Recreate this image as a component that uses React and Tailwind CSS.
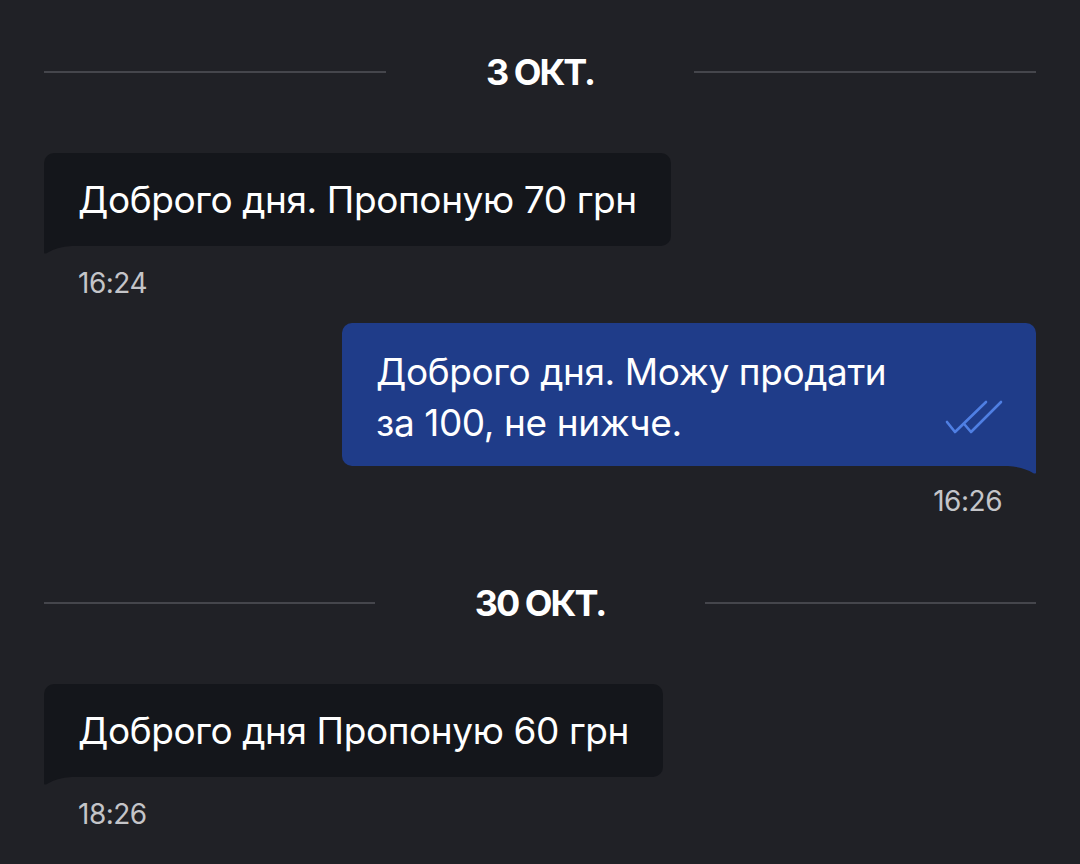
const font = { fontFamily: '"Inter", "Noto Sans", "Liberation Sans", sans-serif' };

const DateSeparator = ({ label, mt }) => (
  <div className={`flex items-center h-[44px] ${mt}`}>
    <div className="flex-1 h-[2px] bg-[#45464c]"></div>
    <div className="px-[100px] text-[36px] font-bold text-white tracking-[-2px]">{label}</div>
    <div className="flex-1 h-[2px] bg-[#45464c]"></div>
  </div>
);

const IncomingMessage = ({ text, time, mt }) => (
  <div className={mt}>
    <div className="relative w-fit">
      <div className="h-[93px] flex items-center px-[34px] bg-[#14161b] rounded-[10px] rounded-bl-none text-white text-[37px] leading-[48px] tracking-[-0.4px]">
        {text}
      </div>
      <svg className="absolute left-0 -bottom-[8px]" width="28" height="8" viewBox="0 0 28 8">
        <path d="M0 0 H28 Q12 1 3 7 Q1 8 0 7 Z" fill="#14161b" />
      </svg>
    </div>
    <div className="mt-[22px] h-[30px] leading-[30px] pl-[34px] text-[28px] text-[#c4c5c9] tracking-[-0.5px]">{time}</div>
  </div>
);

const DoubleCheck = () => (
  <svg width="60" height="40" viewBox="0 0 60 40" fill="none" stroke="#4f7fe3" strokeWidth="2.6" strokeLinecap="round" strokeLinejoin="round">
    <path d="M3 24 L11 34 L42 4" />
    <path d="M21 27 L27 34 L57 4" />
  </svg>
);

const OutgoingMessage = ({ lines, time }) => (
  <div className="mt-[25px] flex flex-col items-end">
    <div className="relative w-[694px]">
      <div className="flex items-end justify-between pl-[34px] pr-[32px] pt-[23px] pb-[18px] bg-[#1f3c89] rounded-[10px] rounded-br-none text-white text-[37px] leading-[51px] tracking-[-0.4px]">
        <div>
          {lines.map((l, i) => (
            <div key={i}>{l}</div>
          ))}
        </div>
        <div className="mb-[10px]">
          <DoubleCheck />
        </div>
      </div>
      <svg className="absolute right-0 -bottom-[8px]" width="28" height="8" viewBox="0 0 28 8">
        <path d="M28 0 H0 Q16 1 25 7 Q27 8 28 7 Z" fill="#1f3c89" />
      </svg>
    </div>
    <div className="mt-[20px] h-[30px] leading-[30px] pr-[34px] text-[28px] text-[#c4c5c9] tracking-[-0.5px]">{time}</div>
  </div>
);

export default function App() {
  return (
    <div style={font} className="w-[1080px] h-[864px] overflow-hidden bg-[#202126] px-[44px]">
      <DateSeparator label="3 ОКТ." mt="mt-[50px]" />
      <IncomingMessage text="Доброго дня. Пропоную 70 грн" time="16:24" mt="mt-[59px]" />
      <OutgoingMessage lines={["Доброго дня. Можу продати", "за 100, не нижче."]} time="16:26" />
      <DateSeparator label="30 ОКТ." mt="mt-[65px]" />
      <IncomingMessage text="Доброго дня Пропоную 60 грн" time="18:26" mt="mt-[59px]" />
    </div>
  );
}
